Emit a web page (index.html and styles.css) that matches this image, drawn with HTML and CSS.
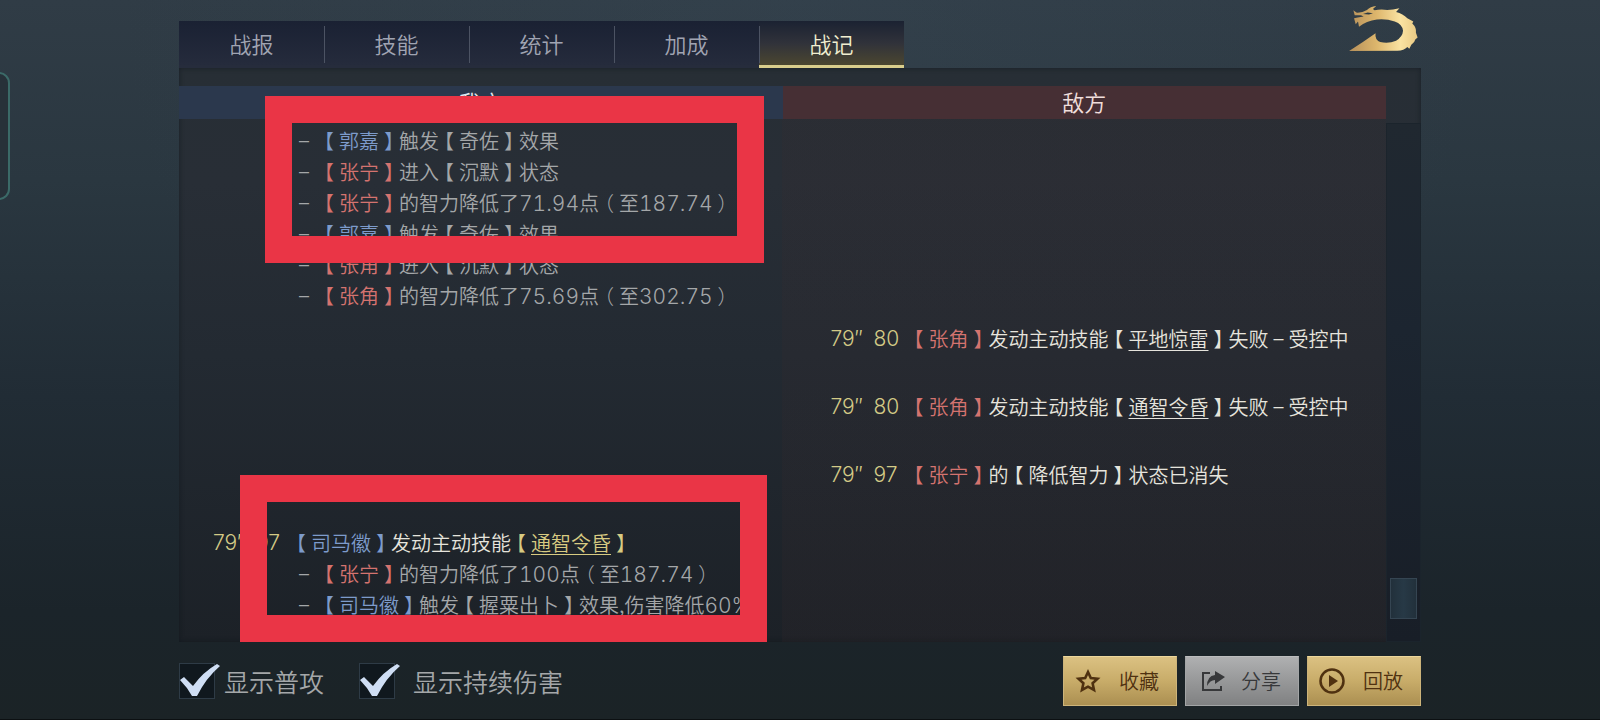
FILE: index.html
```html
<!DOCTYPE html>
<html lang="zh-CN">
<head>
<meta charset="utf-8">
<meta name="viewport" content="width=device-width, initial-scale=1">
<title>战记</title>
<link rel="stylesheet" href="styles.css">
</head>
<body>
<div class="side-handle"></div>
<a class="logo" href="#" aria-label="首页">
  <svg viewBox="84 12 212 142" width="71" height="47" aria-hidden="true">
    <defs>
      <linearGradient id="gold" x1="0" y1="0" x2="1" y2="0">
        <stop offset="0" stop-color="#b58f5a"/>
        <stop offset="0.4" stop-color="#ddb66c"/>
        <stop offset="0.75" stop-color="#fae3a2"/>
        <stop offset="1" stop-color="#e9c983"/>
      </linearGradient>
    </defs>
    <path fill="url(#gold)" d="M99 28 L108 35 Q126 36 140 27 Q150 17 168 15 L158 24 L163 28 Q182 23 201 27 Q218 27 238 22 L228 33 Q249 38 262 52 L280 62 L277 68 Q290 80 288 96 L293 110 L286 116 Q284 126 274 132 L268 144 L262 139 Q252 150 232 150 L86 151 Q128 124 166 97 Q163 116 180 124 Q205 130 228 120 Q248 108 249 90 Q247 70 224 62 Q198 53 170 56 Q138 60 116 78 L113 62 L106 70 L101 52 L112 50 L130 47 L122 43 L103 43 Z"/>
    <path fill="#2a3843" d="M128 39 L142 35 L158 37 L146 41 Z"/>
  </svg>
</a>

<main class="page">
  <nav class="tabs" role="tablist">
    <button class="tab" role="tab" type="button">战报</button>
    <button class="tab" role="tab" type="button">技能</button>
    <button class="tab" role="tab" type="button">统计</button>
    <button class="tab" role="tab" type="button">加成</button>
    <button class="tab tab-active" role="tab" type="button" aria-selected="true">战记</button>
  </nav>

  <section class="panel">
    <div class="log">
      <header class="sides">
        <h2 class="side side-own">我方</h2>
        <h2 class="side side-foe">敌方</h2>
      </header>
      <div class="entries">
        <article class="entry own">
          <ul class="effects">
            <li><span class="ally"><i>【</i>郭嘉<i>】</i></span>触发<i>【</i>奇佐<i>】</i>效果</li>
            <li><span class="enemy"><i>【</i>张宁<i>】</i></span>进入<i>【</i>沉默<i>】</i>状态</li>
            <li><span class="enemy"><i>【</i>张宁<i>】</i></span>的智力降低了<b>71.94</b>点<i>（</i>至<b>187.74</b><i>）</i></li>
            <li><span class="ally"><i>【</i>郭嘉<i>】</i></span>触发<i>【</i>奇佐<i>】</i>效果</li>
            <li><span class="enemy"><i>【</i>张角<i>】</i></span>进入<i>【</i>沉默<i>】</i>状态</li>
            <li><span class="enemy"><i>【</i>张角<i>】</i></span>的智力降低了<b>75.69</b>点<i>（</i>至<b>302.75</b><i>）</i></li>
          </ul>
        </article>
        <article class="entry foe">
          <time class="time"><span>79″</span><span>80</span></time>
          <p class="action"><span class="enemy"><i>【</i>张角<i>】</i></span>发动主动技能<i>【</i><a href="#">平地惊雷</a><i>】</i>失败<span class="dash">–</span>受控中</p>
        </article>
        <article class="entry foe">
          <time class="time"><span>79″</span><span>80</span></time>
          <p class="action"><span class="enemy"><i>【</i>张角<i>】</i></span>发动主动技能<i>【</i><a href="#">通智令昏</a><i>】</i>失败<span class="dash">–</span>受控中</p>
        </article>
        <article class="entry foe">
          <time class="time"><span>79″</span><span>97</span></time>
          <p class="action"><span class="enemy"><i>【</i>张宁<i>】</i></span>的<i>【</i>降低智力<i>】</i>状态已消失</p>
        </article>
        <article class="entry own">
          <time class="time"><span>79″</span><span>97</span></time>
          <p class="action"><span class="ally"><i>【</i>司马徽<i>】</i></span>发动主动技能<span class="skill"><i>【</i><a href="#">通智令昏</a><i>】</i></span></p>
          <ul class="effects">
            <li><span class="enemy"><i>【</i>张宁<i>】</i></span>的智力降低了<b>100</b>点<i>（</i>至<b>187.74</b><i>）</i></li>
            <li><span class="ally"><i>【</i>司马徽<i>】</i></span>触发<i>【</i>握粟出卜<i>】</i>效果,伤害降低<b>60%</b></li>
          </ul>
        </article>
      </div>
    </div>
    <div class="scroll"><div class="track"><div class="thumb"></div></div></div>
    <div class="mark mark-first"></div>
    <div class="mark mark-second"></div>
  </section>

  <footer class="bar">
    <label class="check">
      <span class="box"><input type="checkbox" checked>
        <svg class="tick" viewBox="0 0 42 36" width="42" height="36" aria-hidden="true"><path d="M1 17 L5 14 L14 23 Q24 9 38 1 L41 3 Q27 15 18 33 L13 33 Q8 24 1 17 Z"/></svg>
      </span>显示普攻
    </label>
    <label class="check check-wide">
      <span class="box"><input type="checkbox" checked>
        <svg class="tick" viewBox="0 0 42 36" width="42" height="36" aria-hidden="true"><path d="M1 17 L5 14 L14 23 Q24 9 38 1 L41 3 Q27 15 18 33 L13 33 Q8 24 1 17 Z"/></svg>
      </span>显示持续伤害
    </label>
    <div class="actions">
      <button class="btn" type="button">
        <svg viewBox="0 0 26 26" width="26" height="26" aria-hidden="true"><path fill="none" stroke="currentColor" stroke-width="2.600" d="M13 4 L15.800 10 L22.500 10.800 L17.600 15.300 L19 22 L13 18.700 L7 22 L8.400 15.300 L3.500 10.800 L10.200 10 Z"/></svg>
        <span>收藏</span>
      </button>
      <button class="btn btn-gray" type="button">
        <svg viewBox="0 0 26 26" width="26" height="26" aria-hidden="true"><path fill="none" stroke="currentColor" stroke-width="2" d="M10 5 H3 V22 H21 V18"/><path fill="currentColor" d="M15 3 L25 9 L15 16 V12 Q10 12 7 18 Q7 8 15 7 Z"/></svg>
        <span>分享</span>
      </button>
      <button class="btn" type="button">
        <svg viewBox="0 0 26 26" width="26" height="26" aria-hidden="true"><circle cx="13" cy="13" r="11.500" fill="none" stroke="currentColor" stroke-width="2.500"/><path fill="currentColor" d="M10 7 L19 13 L10 19 Z"/></svg>
        <span>回放</span>
      </button>
    </div>
  </footer>
</main>
</body>
</html>
```
FILE: styles.css
```css
* { box-sizing: border-box; }

body {
  margin: 0;
  min-height: 100vh;
  position: relative;
  color: #a4a7a9;
  font-family: "Noto Sans CJK SC", "Liberation Sans", sans-serif;
  font-weight: 350;
  background:
    radial-gradient(ellipse at 50% 0, rgba(60, 78, 92, 0.25), transparent 60%),
    linear-gradient(#303c46, #2a3740 25%, #212c35 55%, #1b242a 85%, #1b2326);
}

.side-handle {
  position: absolute;
  left: -12px;
  top: 72px;
  width: 22px;
  height: 128px;
  border: 2px solid #3b6a68;
  border-radius: 11px;
  background: #273139;
}

.logo {
  position: absolute;
  right: 181px;
  top: 5px;
  line-height: 0;
}

.page {
  display: flex;
  flex-direction: column;
  min-height: 100vh;
  padding: 21px 179px 0;
  border-bottom: 1px solid #0c1012;
}

/* tabs */
.tabs { display: flex; height: 47px; }

.tab {
  position: relative;
  width: 145px;
  padding: 0;
  border: 0;
  border-bottom: 3px solid #262c3c;
  font: inherit;
  font-size: 22px;
  color: #a0a4b2;
  background: linear-gradient(#1a2133, #252b3c);
}

.tab + .tab::before {
  content: "";
  position: absolute;
  left: 0;
  top: 5px;
  width: 1px;
  height: 37px;
  background: #4c5363;
}

.tab-active {
  color: #f1eed0;
  border-bottom-color: #d9cd8c;
  background: linear-gradient(#1b2232, #30323a 50%, #4b4630);
}

/* battle log */
.panel {
  position: relative;
  flex: 1;
  display: flex;
  padding-top: 18px;
  background: linear-gradient(#272e35, #282e36 20%, #232a32 50%, #1c2127);
  box-shadow: inset 0 0 5px rgba(10, 16, 22, 0.5);
}

.log {
  flex: 1;
  background: linear-gradient(90deg, transparent 50%, rgba(60, 42, 44, 0.16) 50%);
}

.sides { display: flex; }

.side {
  flex: 1;
  margin: 0;
  padding-bottom: 3px;
  font-size: 22px;
  line-height: 30px;
  font-weight: 350;
  text-align: center;
  color: #f0dedb;
}

.side-own { background: #2b384d; color: #e4e8ee; }
.side-foe { background: #462f34; }

.entries { padding-top: 6px; }

.entry {
  display: grid;
  grid-template-columns: 78px 1fr;
  min-height: 68px;
  padding-bottom: 12px;
  align-content: start;
  font-size: 20px;
  line-height: 31px;
  white-space: nowrap;
}

.own { margin-right: 50%; padding-left: 34px; }
.foe { margin-left: 50%; padding-left: 48px; }

.time, .entry b {
  font-family: Inter, "Liberation Sans", sans-serif;
  font-size: 21px;
  font-weight: 300;
}

.entry b { line-height: 1; font-variant-numeric: tabular-nums; }

.time { display: flex; color: #d3ca86; }
.time span:first-child { width: 43px; }

.action { margin: 0; color: #e6e4dd; }

.effects {
  grid-column: 2;
  margin: 0;
  padding: 0 0 0 8px;
  list-style: none;
}

.effects li::before, .dash {
  display: inline-block;
  width: 20px;
  font-family: Inter, "Liberation Sans", sans-serif;
  font-feature-settings: "case";
  line-height: 1;
}

.effects li::before { content: "–"; }
.dash { text-align: center; }

.entry a { color: inherit; text-underline-offset: 3px; text-decoration-thickness: 1px; }

/* brackets: half-width glyph centred in a full-width cell */
.entry i {
  padding: 0 5px;
  font-style: normal;
  font-weight: 300;
  font-feature-settings: "halt";
}

.ally { color: #7d9bcb; }
.enemy { color: #d4736f; }
.skill { color: #d8cb82; }

/* scroll bar */
.scroll { display: flex; width: 35px; padding-top: 37px; }

.track {
  flex: 1;
  display: flex;
  flex-direction: column;
  justify-content: flex-end;
  padding: 0 3px 22px;
  border: 1px solid #1b242c;
  background: linear-gradient(#202830, #1c2530 40%, #181e27);
}

.thumb {
  height: 41px;
  border: 1px solid #354552;
  background: linear-gradient(90deg, #22303b, #273946, #22303b);
}

/* highlight frames */
.mark { position: absolute; border: 27px solid #ea3546; }
.mark-first { left: 86px; top: 28px; width: 499px; height: 167px; }
.mark-second { left: 61px; top: 407px; width: 527px; height: 167px; }

/* bottom bar */
.bar {
  display: flex;
  align-items: center;
  height: 77px;
}

.check { display: flex; align-items: center; gap: 9px; font-size: 25px; margin-right: 35px; }
.check-wide { gap: 18px; }

.box { position: relative; width: 36px; height: 36px; }

.box input {
  appearance: none;
  display: block;
  width: 36px;
  height: 36px;
  margin: 0;
  border: 1px solid #2e3b46;
  background: #10181e;
}

.tick { position: absolute; left: 0; top: 0; fill: #cfdef4; visibility: hidden; pointer-events: none; }
.box input:checked + .tick { visibility: visible; }

.actions { display: flex; gap: 8px; margin-left: auto; }

.btn {
  display: flex;
  align-items: center;
  justify-content: space-between;
  width: 114px;
  height: 50px;
  padding: 0 17px 0 11px;
  border: 1px solid #cdb47a;
  border-top-color: #ecd79c;
  font: inherit;
  font-size: 20px;
  color: #4f3110;
  background: linear-gradient(#dbc182, #c8ac69 50%, #ab8f51);
}

.btn-gray {
  padding-left: 14px;
  color: #37383a;
  border-color: #a3a5a6;
  border-top-color: #bcbdbe;
  background: linear-gradient(#afb0b1, #979899 50%, #808182);
}
```
